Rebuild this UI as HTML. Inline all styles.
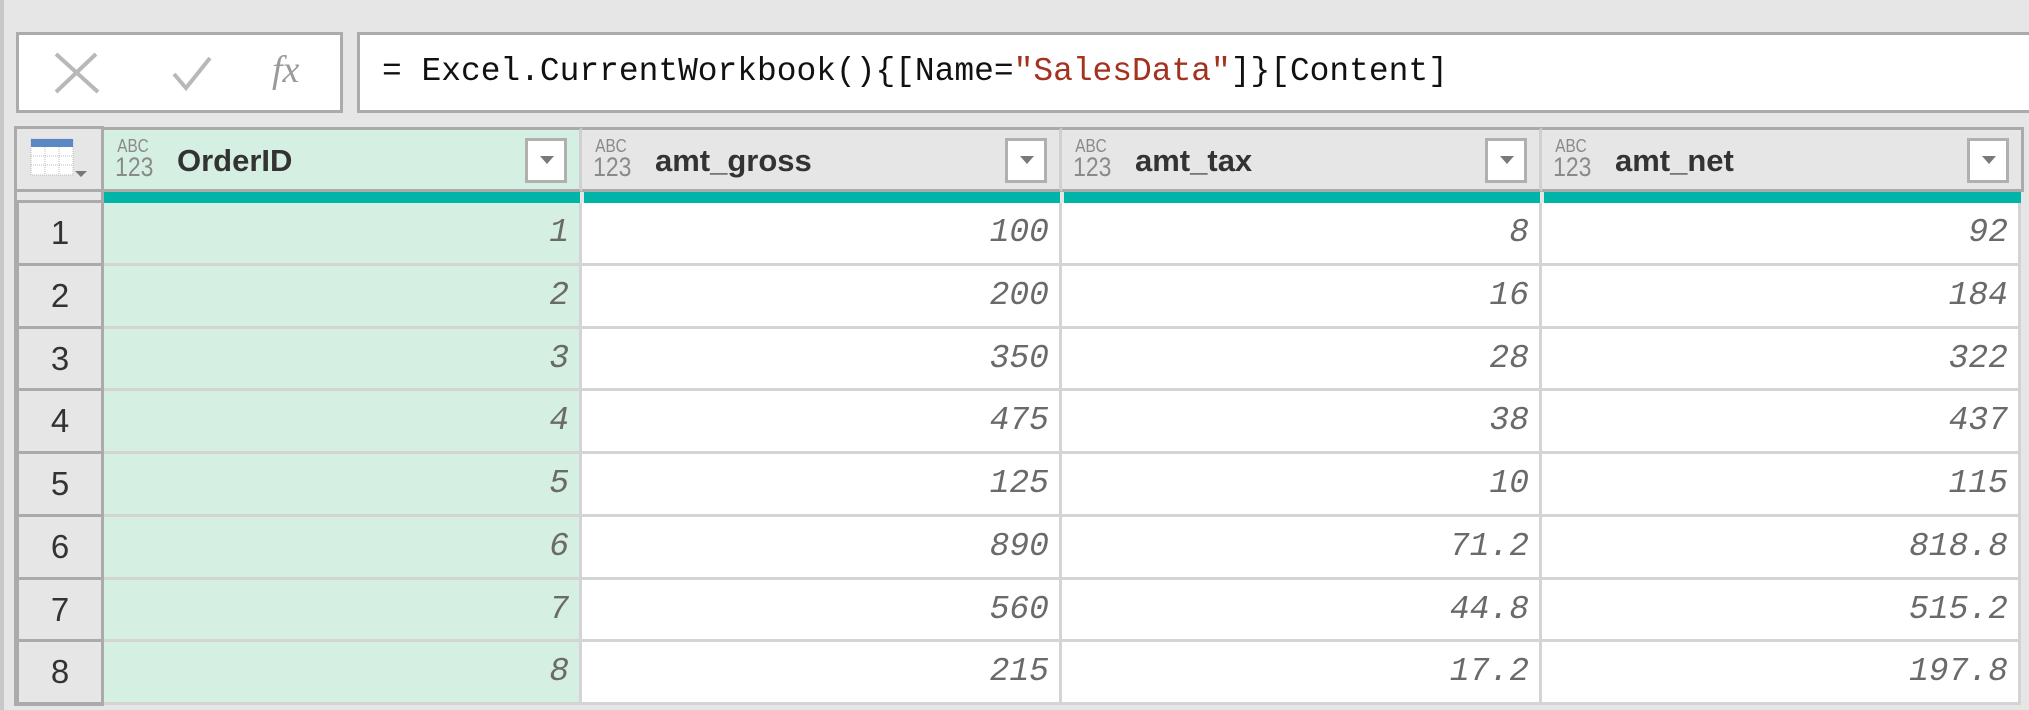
<!DOCTYPE html>
<html><head><meta charset="utf-8"><style>
*{margin:0;padding:0;box-sizing:border-box}
body{width:2029px;height:710px;background:#e6e6e6;position:relative;overflow:hidden;font-family:"Liberation Sans",sans-serif}
.abs{position:absolute}
.box{background:#fff;border:3px solid #ababab}
.mono{font-family:"Liberation Mono",monospace}
.hdr{position:absolute;top:127px;height:65px;background:#e6e6e6;border-right:3px solid #d0d0d0;border-top:3px solid #ababab;border-bottom:3px solid #ababab}
.hdr .t{position:absolute;left:73px;top:13px;font-size:31px;font-weight:bold;color:#333}
.ic{position:absolute;left:8px;top:7px;color:#8a8a8a;line-height:18px;text-align:center;width:42px}
.ic b{display:block;font-weight:normal;font-size:18px;transform:scaleX(0.85)}
.ic span{display:block;font-size:27px;line-height:24px;transform:scaleX(0.85)}
.dd{position:absolute;top:8px;right:12px;width:42px;height:45px;background:#fff;border:3px solid #b0b0b0}
.dd:after{content:"";position:absolute;left:12px;top:15px;border-left:7px solid transparent;border-right:7px solid transparent;border-top:8px solid #7a7a7a}
.teal{position:absolute;top:192px;height:11px;background:#00b5a7}
.cell{position:absolute;height:62.75px;border-bottom:3px solid #d4d4d4;border-right:3px solid #d4d4d4;font-family:"Liberation Mono",monospace;font-style:italic;font-size:33px;color:#6a6a6a;text-align:right;padding-right:10px;line-height:60px}
.rn{position:absolute;left:16px;width:88px;height:62.75px;background:#e6e6e6;border:3px solid #ababab;border-top:none;font-size:33px;color:#333;text-align:center;line-height:60px}
</style></head><body>
<div class="abs" style="left:0;top:0;width:4px;height:710px;background:#c8c8c8"></div>
<div class="abs box" style="left:16px;top:32px;width:327px;height:81px"></div>
<svg class="abs" style="left:50px;top:50px" width="300" height="45">
<path d="M6 4 L48 42 M46 4 L6 42" stroke="#b8b8b8" stroke-width="4" fill="none"/>
<path d="M124 24 L136 38 L160 8" stroke="#b8b8b8" stroke-width="4" fill="none"/>
<text x="222" y="32" font-family="Liberation Serif" font-style="italic" font-size="38" fill="#9a9a9a">fx</text>
</svg>
<div class="abs box" style="left:357px;top:32px;width:1690px;height:81px"></div>
<div class="abs mono" style="left:382px;top:52px;font-size:32.9px;color:#111;white-space:pre;line-height:40px">= Excel.CurrentWorkbook(){[Name=<span style="color:#a3321e">"SalesData"</span>]}[Content]</div>

<div class="abs" style="left:14px;top:126px;width:90px;height:580px;background:#e6e6e6;border:3px solid #ababab"></div>
<svg class="abs" style="left:30px;top:138px" width="60" height="45">
<rect x="1" y="1" width="42" height="36" fill="#fff" stroke="#bbb" stroke-dasharray="1,1"/>
<rect x="1" y="1" width="42" height="8" fill="#5b87c5"/>
<path d="M1 18H43M1 27H43M15 9V37M29 9V37" stroke="#bbb" stroke-dasharray="1,1"/>
<path d="M45 33 L57 33 L51 39Z" fill="#777"/>
</svg>
<div class="abs" style="left:17px;top:189px;width:87px;height:14px;border-top:3px solid #ababab;border-bottom:3px solid #ababab"></div>

<div class="hdr" style="left:104px;width:478px;background:#d5efe2"><div class="ic"><b>ABC</b><span>123</span></div><div class="t">OrderID</div><div class="dd"></div></div>
<div class="hdr" style="left:582px;width:480px"><div class="ic"><b>ABC</b><span>123</span></div><div class="t">amt_gross</div><div class="dd"></div></div>
<div class="hdr" style="left:1062px;width:480px"><div class="ic"><b>ABC</b><span>123</span></div><div class="t">amt_tax</div><div class="dd"></div></div>
<div class="hdr" style="left:1542px;width:482px;border-right:3px solid #ababab"><div class="ic"><b>ABC</b><span>123</span></div><div class="t">amt_net</div><div class="dd"></div></div>
<div class="teal" style="left:104px;width:476px"></div>
<div class="teal" style="left:584px;width:476px"></div>
<div class="teal" style="left:1064px;width:476px"></div>
<div class="teal" style="left:1544px;width:477px"></div>
<div id="rows"></div>
<script>
var d=[[1,100,8,92],[2,200,16,184],[3,350,28,322],[4,475,38,437],[5,125,10,115],[6,890,71.2,818.8],[7,560,44.8,515.2],[8,215,17.2,197.8]];
var L=[104,582,1062,1542],W=[478,480,480,479],h='';
d.forEach(function(r,i){var t=203+i*62.75;
h+='<div class="rn" style="top:'+t+'px">'+(i+1)+'</div>';
r.forEach(function(v,j){h+='<div class="cell" style="top:'+t+'px;left:'+L[j]+'px;width:'+W[j]+'px;background:'+(j==0?'#d5efe2':'#fff')+'">'+v+'</div>';});});
document.getElementById('rows').innerHTML=h;
</script>
</body></html>
